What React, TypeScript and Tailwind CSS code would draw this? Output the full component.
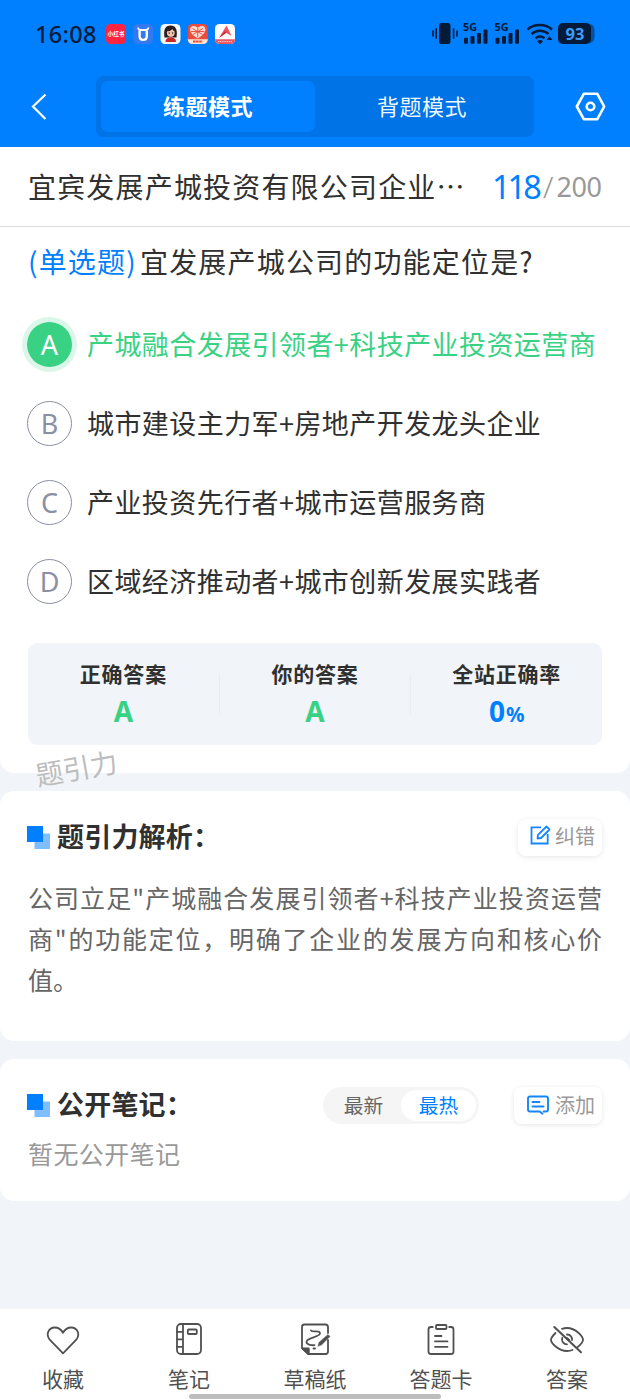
import type { ReactNode } from 'react';

const options = [
  { key: 'A', text: '产城融合发展引领者+科技产业投资运营商', correct: true },
  { key: 'B', text: '城市建设主力军+房地产开发龙头企业', correct: false },
  { key: 'C', text: '产业投资先行者+城市运营服务商', correct: false },
  { key: 'D', text: '区域经济推动者+城市创新发展实践者', correct: false },
];

function AppIcons() {
  return (
    <svg width="130" height="20" viewBox="0 0 130 20" className="ml-[10px]">
      <rect width="20" height="20" rx="4.5" fill="#ff2442" />
      <text x="10" y="12.4" fontSize="5.6" fontWeight="700" textAnchor="middle" fill="#fff">小红书</text>
      <rect x="27.2" width="20" height="20" rx="4.5" fill="#3478f2" />
      <path d="M32 3.500c.2 1.700 1.200 2.500 2.500 2.500h5.400c1.300 0 2.300-.8 2.500-2.500" fill="none" stroke="#fff" strokeWidth="1.800" />
      <path d="M33.600 6.500v5.400c0 5.300 7.200 5.300 7.200 0V6.500" fill="none" stroke="#fff" strokeWidth="2.400" />
      <rect x="54.500" width="20" height="20" rx="4.500" fill="#f4f4f2" />
      <path d="M58.500 13.500C57 4 60.500 1.500 64.500 1.500s7.500 2.500 6 12z" fill="#2b1c1c" />
      <ellipse cx="64.800" cy="8.600" rx="3.900" ry="4.300" fill="#f0c4ac" />
      <path d="M61 7.200c3 .3 4.500-1 5.200-2.500 .6 1.500 1.400 2.200 2.600 2.500l-.8-3.500-4-.9-2.600 1.500z" fill="#2b1c1c" />
      <circle cx="63.200" cy="9" r=".7" fill="#222" /><circle cx="66.600" cy="9" r=".7" fill="#222" />
      <path d="M59.500 18c0-3.500 2.500-4.500 5.200-4.500S70 14.500 70 18z" fill="#c72a25" />
      <rect x="81.800" width="20" height="20" rx="4.500" fill="#e94b3f" />
      <path d="M91.800 14.500c-11-6.500-8-12.500-4-12.500 2 0 3.300 1 4 2 .7-1 2-2 4-2 4 0 7 6-4 12.500z" fill="#fbd9cb" />
      <path d="M86.500 4.500l10 6M97 4.500l-10 6M91.800 4v9.500M85 7.500h13.500" stroke="#e5483d" strokeWidth=".9" />
      <path d="M81.800 15.200h20v.3a4.500 4.500 0 0 1-4.500 4.500h-11a4.500 4.500 0 0 1-4.500-4.500z" fill="#fbe4d2" />
      <path d="M87 17.500h9.500" stroke="#dd4a3d" strokeWidth="2" strokeDasharray="2.500 .6" />
      <rect x="109" width="20" height="20" rx="4.500" fill="#fff" />
      <path d="M109 15.300h20v.2a4.500 4.500 0 0 1-4.500 4.500h-11a4.500 4.500 0 0 1-4.500-4.500z" fill="#ed5560" />
      <path d="M112 17.600h14" stroke="#fff" strokeWidth="1" strokeDasharray="1.500 .6" opacity=".7" />
      <path d="M113 14 120.500 1.500 125.500 12l-5.500-3.300z" fill="#ef5360" />
      <path d="M113 14 119 7l1.500 1.700z" fill="#c9303f" />
    </svg>
  );
}

function StatusIcons() {
  const bars = (x: number) => (
    <g key={x}>
      <text x={x} y="12" fontSize="10.800" fontWeight="700">5G</text>
      <rect x={x + 1} y="18.800" width="4" height="6" rx="1" />
      <rect x={x + 7.500} y="17" width="4" height="7.800" rx="1" />
      <rect x={x + 14} y="14" width="4" height="10.800" rx="1" />
      <rect x={x + 20.500} y="10.500" width="4" height="14.300" rx="1" />
    </g>
  );
  return (
    <svg width="164" height="30" viewBox="0 0 164 30" fill="#031b38" className="[font-family:'Noto_Sans',sans-serif]">
      <rect x="8" y="4" width="11.500" height="21" rx="2.500" />
      <path d="M2 12v5M5.200 9.800v9.500M22.600 9.800v9.500M26 12v5" stroke="#031b38" strokeWidth="1.600" strokeLinecap="round" />
      {bars(32)}
      {bars(63.500)}
      <g fill="none" stroke="#031b38" strokeWidth="2.500">
        <path d="M96.500 10.600c6.500-6 18-6 24.500 0" />
        <path d="M100.500 15c5-4.500 12-4.500 17 0" />
        <path d="M104.500 19.200c3-2.300 6-2.300 9 0" />
      </g>
      <path d="M109 25.200l-3-3q3-2.200 6 0z" />
      <path d="M118.500 17l3 4h-6z" />
      <path d="M155 4.500q8.500 0 8.500 6v8q0 6-8.500 6z" fill="#07509d" />
      <rect x="127" y="4" width="33" height="21" rx="5" />
      <text x="144" y="20.500" fontSize="16.500" fontWeight="700" textAnchor="middle" fill="#3d9bff">93</text>
    </svg>
  );
}

function SectionHeading({ children }: { children: ReactNode }) {
  return (
    <div className="flex items-center">
      <svg width="23" height="23" viewBox="0 0 23 23" className="mr-[7px] -ml-px">
        <path d="M7.500 7.500H23V23H7.500z" fill="#80bfff" />
        <path d="M0 0h16v16H0z" fill="#007fff" />
      </svg>
      <h2 className="pb-[2px] text-[27px] leading-[36px] font-bold tracking-[0.200px] text-[#303030]">{children}</h2>
    </div>
  );
}

const nav = [
  {
    label: '收藏',
    icon: <path d="M17 31.300 3.700 17.700C-.5 12.500 2.500 5.500 8.800 5.500c3.800 0 6.300 1.800 8.200 5.300 1.900-3.500 4.400-5.300 8.200-5.300 6.300 0 9.300 7 5.100 12.200z" />,
  },
  {
    label: '笔记',
    icon: (
      <>
        <rect x="5" y="2" width="24" height="30" rx="4" />
        <path d="M11 2v30M5 9.800h6M5 17.300h6M5 24.800h6" />
        <rect x="15.800" y="7.500" width="9" height="4.500" rx="1" />
      </>
    ),
  },
  {
    label: '草稿纸',
    icon: (
      <>
        <path d="M30 11V5q0-2.500-2.500-2.500h-21Q4 2.500 4 5v21l6 6h17.500q2.500 0 2.500-2.500V18" />
        <path d="M4.500 26.500h6.300v5z" fill="#505050" />
        <path d="M13 8.500c2 2.500 8-1 9 2.500 1 4-13.500 4.500-13.500 8.800 0 2.800 4.500 3.700 8 3.400" />
        <path d="M20 24l1.200-3.800 8.800-7.700 2 2-8.300 8.300z" fill="#505050" strokeWidth=".5" />
        <path d="M15.500 26.500h1.500" />
      </>
    ),
  },
  {
    label: '答题卡',
    icon: (
      <>
        <path d="M8.800 5H7Q4.500 5 4.500 7.500v22Q4.500 32 7 32h20q2.500 0 2.500-2.500v-22Q29.500 5 27 5h-1.800" />
        <rect x="12" y="3" width="10.500" height="4" rx="1" />
        <path d="M11 14h6.500M11 19.400h12.500M11 24.800h12.500" />
      </>
    ),
  },
  {
    label: '答案',
    icon: (
      <>
        <path d="M5.500 11C3 13.500 1 16.300 1 17.800c0 3 7 11.200 16 11.200 2.200 0 4-.4 5.500-1M12 6.800c1.500-.5 3.200-.8 5-.8 9 0 16 8.800 16 11.800 0 1.500-2.500 5-5.500 7.300" />
        <path d="M12.300 15.800c-1.500 3.500 1.700 6.500 4.700 6.500M17 12.500c3.500 0 5.500 3 5 5.500M17 16l2.500 2.200" />
        <path d="M4.300 5 31 30.300" strokeWidth="2" />
      </>
    ),
  },
];

export default function App() {
  return (
    <div className="flex h-[1400px] w-[630px] flex-col overflow-hidden bg-[#f1f4f8] text-[#303030] [font-family:'Noto_Sans_CJK_SC','Noto_Sans',sans-serif]">
      <header className="h-[147px] shrink-0 bg-[#007fff]">
        <div className="flex h-[68px] items-center pl-[35px]">
          <span className="w-[61px] text-[23.500px] leading-[30px] font-medium tracking-[0.300px] whitespace-nowrap text-[#031b38] [font-family:'Noto_Sans',sans-serif]">16:08</span>
          <AppIcons />
          <div className="mr-[35px] ml-auto"><StatusIcons /></div>
        </div>
        <div className="flex h-[77px] items-center">
          <button className="flex w-[96px] pl-[30px]">
            <svg width="18" height="28" viewBox="0 0 18 28" fill="none" stroke="#fff" strokeWidth="2.200"><path d="M15.500 1.500 3 13.500l12.500 12.500" /></svg>
          </button>
          <div className="flex h-[61px] w-[438px] rounded-[8px] bg-[#0073e6] p-[5px] text-[22px] tracking-[0.500px] text-white">
            <button className="flex-1 rounded-[7px] bg-[#007fff] pb-[3px] font-bold">练题模式</button>
            <button className="flex-1 pb-[3px] text-white/95">背题模式</button>
          </div>
          <button className="ml-[41px]">
            <svg width="31" height="30" viewBox="0 0 31 30" fill="none" stroke="#fff" strokeWidth="2.600" strokeLinejoin="round">
              <path d="M8.800 1.800h13.500L29.200 14.500l-6.900 12.700H8.800L1.800 14.500z" /><circle cx="15.500" cy="14.500" r="3.800" />
            </svg>
          </button>
        </div>
      </header>

      <main className="flex flex-1 flex-col gap-[18px]">
        <section className="relative h-[626px] rounded-b-[14px] bg-white">
          <div className="flex h-[80px] items-center border-b border-[#dcdcdc] pl-[28px]">
            <h1 className="w-[464px] pb-[2px] text-[28px] leading-[40px] tracking-[1.180px] whitespace-nowrap">宜宾发展产城投资有限公司企业⋯</h1>
            <p className="flex items-center whitespace-nowrap [font-family:'Noto_Sans',sans-serif]">
              <span className="w-[51px] pt-px text-[32.500px] leading-[40px] tracking-[-3px] text-[#007fff]">118</span>
              <span className="text-[30px] leading-[40px] font-light text-[#999]">/</span>
              <span className="ml-[3px] text-[27px] leading-[40px] tracking-[-0.400px] text-[#999]">200</span>
            </p>
          </div>
          <h2 className="flex h-[70px] items-center pb-[2px] pl-[28px] text-[28px] tracking-[1.180px] whitespace-nowrap">
            <span className="w-[112px] text-[#007fff]">(单选题)</span>
            <span>宜发展产城公司的功能定位是?</span>
          </h2>
          <ul className="mt-[8px]">
            {options.map((o) => (
              <li key={o.key} className="flex h-[79px] items-center pl-[27px] text-[27px] whitespace-nowrap">
                <span
                  className={
                    o.correct
                      ? 'flex size-[45px] items-center justify-center rounded-full bg-[#39d284] text-[27px] text-white shadow-[0_0_0_5px_#dcf7e9] [font-family:"Noto_Sans",sans-serif]'
                      : 'flex size-[45px] items-center justify-center rounded-full border-[1.500px] border-[#8b8fa3] text-[27px] text-[#8b8fa3] [font-family:"Noto_Sans",sans-serif]'
                  }
                >
                  <span className="pt-[2px]">{o.key}</span>
                </span>
                <span className={o.correct ? 'ml-[15px] tracking-[0.430px] text-[#39d284]' : 'ml-[15px] tracking-[0.430px]'}>{o.text}</span>
              </li>
            ))}
          </ul>
          <div className="mx-[28px] mt-[22px] flex h-[102px] items-center rounded-[9px] bg-[#f1f4f8] text-center">
            <div className="flex-1">
              <p className="text-[21px] leading-[32px] font-bold tracking-[0.800px]">正确答案</p>
              <p className="h-[42px] pt-px text-[28px] leading-[42px] font-bold text-[#39d284] [font-family:'Noto_Sans',sans-serif]">A</p>
            </div>
            <span className="h-[40px] w-px bg-[#e9ecf1]" />
            <div className="flex-1">
              <p className="text-[21px] leading-[32px] font-bold tracking-[0.800px]">你的答案</p>
              <p className="h-[42px] pt-px text-[28px] leading-[42px] font-bold text-[#39d284] [font-family:'Noto_Sans',sans-serif]">A</p>
            </div>
            <span className="h-[40px] w-px bg-[#e9ecf1]" />
            <div className="flex-1">
              <p className="text-[21px] leading-[32px] font-bold tracking-[0.800px]">全站正确率</p>
              <p className="h-[42px] pt-px text-[28px] leading-[42px] font-bold text-[#007fff] [font-family:'Noto_Sans',sans-serif]">0<span className="ml-px text-[20.500px] leading-none">%</span></p>
            </div>
          </div>
          <span className="absolute top-[601px] left-[35px] z-10 -rotate-10 text-[27.500px] leading-[38px] text-[#bdbdbd]">题引力</span>
        </section>

        <section className="h-[250px] rounded-[14px] bg-white px-[28px] pt-[27px]">
          <div className="flex h-[38px] items-center justify-between">
            <SectionHeading>题引力解析：</SectionHeading>
            <button className="flex h-[37px] w-[84px] items-center rounded-[8px] pl-[12px] text-[20px] text-[#999] shadow-[0_1px_5px_rgba(0,0,0,0.10)]">
              <svg width="21" height="21" viewBox="0 0 21 21" fill="none" stroke="#1687fa" strokeWidth="1.800" className="mr-[4px] mb-[3px] shrink-0">
                <path d="M11 2.300H1.500v16.200h16.200V9" /><path d="m7.500 13.500.5-3.700 8.500-8.300 3 3-8.400 8.500z" strokeLinejoin="round" />
              </svg>
              <span className="pb-[2px]">纠错</span>
            </button>
          </div>
          <p className="mt-[21px] text-[25px] leading-[41px] whitespace-nowrap text-[#666]">
            <span className="block [text-align-last:justify]">公司立足"产城融合发展引领者+科技产业投资运营</span>
            <span className="block [text-align-last:justify]">商"的功能定位，明确了企业的发展方向和核心价</span>
            <span className="block">值。</span>
          </p>
        </section>

        <section className="h-[142px] rounded-[14px] bg-white px-[28px] pt-[27px]">
          <div className="flex h-[38px] items-center">
            <SectionHeading>公开笔记：</SectionHeading>
            <div className="ml-auto flex h-[37px] w-[156px] rounded-full bg-[#f5f5f5] p-[3px] text-[19.700px] text-[#666]">
              <button className="w-[75px]">最新</button>
              <button className="flex-1 rounded-full bg-white text-[#007fff]">最热</button>
            </div>
            <button className="ml-[35px] flex h-[37px] w-[88px] items-center rounded-[8px] pl-[13px] text-[20px] text-[#999] shadow-[0_1px_5px_rgba(0,0,0,0.10)]">
              <svg width="22" height="21" viewBox="0 0 22 21" fill="none" stroke="#1687fa" strokeWidth="1.900" strokeLinecap="round" className="mr-[6px] shrink-0">
                <path d="M16.500 16.500H19q2 0 2-2v-11q0-2-2-2H3q-2 0-2 2v11q0 2 2 2h9.500l3 2.200" /><path d="M5.500 7h7M5.500 11.500h11" />
              </svg>
              <span className="pb-px">添加</span>
            </button>
          </div>
          <p className="mt-[10px] text-[25px] leading-[38px] tracking-[0.400px] text-[#999]">暂无公开笔记</p>
        </section>
      </main>

      <nav className="relative flex h-[91px] shrink-0 bg-white text-[#505050]">
        {nav.map((item) => (
          <button key={item.label} className="flex flex-1 flex-col items-center pt-[13px]">
            <svg width="34" height="35" viewBox="0 0 34 35" fill="none" stroke="#505050" strokeWidth="1.800" strokeLinecap="round" strokeLinejoin="round">{item.icon}</svg>
            <span className="mt-[5px] text-[21px] leading-[32px]">{item.label}</span>
          </button>
        ))}
        <span className="absolute top-[85px] left-[189px] h-[5px] w-[252px] rounded-full bg-[#bdbdbd]" />
      </nav>
    </div>
  );
}
